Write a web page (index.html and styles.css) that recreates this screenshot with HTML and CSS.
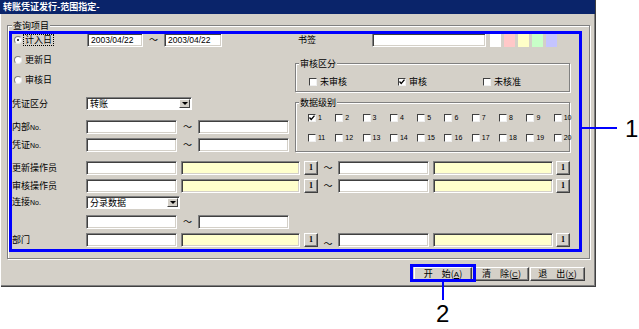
FILE: index.html
```html
<!DOCTYPE html>
<html lang="zh-CN">

<head>
    <meta charset="UTF-8">
    <title>转账凭证发行-范围指定-</title>
    <link rel="stylesheet" href="styles.css">
</head>

<body>
    <div class="stage">
        <div class="window">
            <div class="titlebar">转账凭证发行-范围指定-</div>

            <fieldset class="group main">
                <legend>查询项目</legend>

                <div class="top">
                    <!-- 左侧：日期、凭证区分、编号 -->
                    <div class="left">
                        <div class="row">
                            <label class="radio-item first">
                                <span class="radio on"></span>
                                <span class="focus">计入日</span>
                            </label>
                            <div class="field w56">2003/04/22</div>
                            <span class="tilde">～</span>
                            <div class="field w58">2003/04/22</div>
                        </div>
                        <div class="row small r2">
                            <label class="radio-item"><span class="radio"></span><span class="txt">更新日</span></label>
                        </div>
                        <div class="row small r3">
                            <label class="radio-item"><span class="radio"></span><span class="txt">审核日</span></label>
                        </div>
                        <div class="row sel r4">
                            <span class="label">凭证区分</span>
                            <div class="select w106"><span>转账</span><span class="arrow"></span></div>
                        </div>
                        <div class="row r5">
                            <span class="label">内部<small>No.</small></span>
                            <div class="field w91"></div>
                            <span class="tilde">～</span>
                            <div class="field w91"></div>
                        </div>
                        <div class="row r6">
                            <span class="label">凭证<small>No.</small></span>
                            <div class="field w91"></div>
                            <span class="tilde">～</span>
                            <div class="field w91"></div>
                        </div>
                    </div>

                    <!-- 右侧：书签、审核区分、数据级别 -->
                    <div class="right">
                        <div class="row">
                            <span class="label bm">书签</span>
                            <div class="field w114"></div>
                            <div class="swatches">
                                <span class="sw white"></span>
                                <span class="sw pink"></span>
                                <span class="sw yellow"></span>
                                <span class="sw green"></span>
                                <span class="sw blue"></span>
                            </div>
                        </div>

                        <fieldset class="group sub audit">
                            <legend>审核区分</legend>
                            <div class="checks">
                                <label class="chk c1"><span class="check"></span>未审核</label>
                                <label class="chk c2"><span class="check"><svg width="6" height="6" viewBox="0 0 6 6"><polyline points="0.5,2.5 2.2,4.5 5.5,0.6" fill="none" stroke="#000" stroke-width="1.3"/></svg></span>审核</label>
                                <label class="chk"><span class="check"></span>未核准</label>
                            </div>
                        </fieldset>

                        <fieldset class="group sub level">
                            <legend>数据级别</legend>
                            <div class="levels">
                                <label class="chk num"><span class="check"><svg width="6" height="6" viewBox="0 0 6 6"><polyline points="0.5,2.5 2.2,4.5 5.5,0.6" fill="none" stroke="#000" stroke-width="1.3"/></svg></span>1</label>
                                <label class="chk num"><span class="check"></span>2</label>
                                <label class="chk num"><span class="check"></span>3</label>
                                <label class="chk num"><span class="check"></span>4</label>
                                <label class="chk num"><span class="check"></span>5</label>
                                <label class="chk num"><span class="check"></span>6</label>
                                <label class="chk num"><span class="check"></span>7</label>
                                <label class="chk num"><span class="check"></span>8</label>
                                <label class="chk num"><span class="check"></span>9</label>
                                <label class="chk num last"><span class="check"></span>10</label>
                                <label class="chk num"><span class="check"></span>11</label>
                                <label class="chk num"><span class="check"></span>12</label>
                                <label class="chk num"><span class="check"></span>13</label>
                                <label class="chk num"><span class="check"></span>14</label>
                                <label class="chk num"><span class="check"></span>15</label>
                                <label class="chk num"><span class="check"></span>16</label>
                                <label class="chk num"><span class="check"></span>17</label>
                                <label class="chk num"><span class="check"></span>18</label>
                                <label class="chk num"><span class="check"></span>19</label>
                                <label class="chk num last"><span class="check"></span>20</label>
                            </div>
                        </fieldset>
                    </div>
                </div>

                <!-- 操作员、连接、部门 -->
                <div class="row r7">
                    <span class="label">更新操作员</span>
                    <div class="field w91"></div>
                    <div class="field yellow w119 gap"></div>
                    <span class="pick gap">1</span>
                    <span class="tilde w20">～</span>
                    <div class="field w91"></div>
                    <div class="field yellow w120 gap"></div>
                    <span class="pick gap3">1</span>
                </div>
                <div class="row r8">
                    <span class="label">审核操作员</span>
                    <div class="field w91"></div>
                    <div class="field yellow w119 gap"></div>
                    <span class="pick gap">1</span>
                    <span class="tilde w20">～</span>
                    <div class="field w91"></div>
                    <div class="field yellow w120 gap"></div>
                    <span class="pick gap3">1</span>
                </div>
                <div class="row sel r9">
                    <span class="label">连接<small>No.</small></span>
                    <div class="select w94"><span>分录数据</span><span class="arrow"></span></div>
                </div>
                <div class="row r10">
                    <span class="label"></span>
                    <div class="field w91"></div>
                    <span class="tilde">～</span>
                    <div class="field w91"></div>
                </div>
                <div class="row r11">
                    <span class="label">部门</span>
                    <div class="field w91"></div>
                    <div class="field yellow w119 gap"></div>
                    <span class="pick gap">1</span>
                    <span class="tilde w20 low">～</span>
                    <div class="field w91"></div>
                    <div class="field yellow w120 gap"></div>
                    <span class="pick gap3">1</span>
                </div>
            </fieldset>

            <div class="buttons">
                <span class="btn b-start">开　始(<u>A</u>)</span>
                <span class="btn b-clear">清　除(<u>C</u>)</span>
                <span class="btn b-exit">退　出(<u>X</u>)</span>
            </div>
        </div>

        <!-- 说明标注 -->
        <div class="mark mark-form"></div>
        <div class="lead lead-1"></div>
        <div class="num-label num-1">1</div>
        <div class="mark mark-start"></div>
        <div class="lead lead-2"></div>
        <div class="num-label num-2">2</div>
    </div>
</body>

</html>
```

FILE: styles.css
```css
* {
    box-sizing: border-box;
}

body {
    margin: 0;
    background-color: #fff;
    font-family: "Noto Sans CJK SC", sans-serif;
    font-size: 9px;
    color: #000;
}

.stage {
    position: relative;
    width: 639px;
    height: 329px;
}

.window {
    width: 596px;
    height: 287px;
    background-color: #d4d0c8;
    box-shadow: inset 1px 0 0 #fff, inset -1px -1px 0 #404040, inset -2px -2px 0 #808080;
}

.titlebar {
    height: 14px;
    margin-right: 1px;
    padding-left: 3px;
    background-color: #0a246a;
    color: #fff;
    font-weight: bold;
    line-height: 14px;
}

/* 分组框 */
.group {
    margin: 0;
    min-width: 0;
    border: 1px solid #808080;
    box-shadow: 1px 1px 0 #fff, inset 1px 1px 0 #fff;
}

.group legend {
    padding: 0 1px;
    line-height: 11px;
    background-color: #d4d0c8;
}

.main {
    width: 583px;
    margin: 6px 0 0 7px;
    padding: 2px 0 11px 4px;
}

.top {
    display: flex;
}

.left {
    width: 283px;
}

.right {
    width: 275px;
}

.row {
    display: flex;
    align-items: center;
    height: 14px;
}

.row.small {
    height: 12px;
}

.row.sel {
    height: 13px;
}

.r2 { margin-top: 7px; }
.r3 { margin-top: 8px; }
.r4 { margin-top: 11px; }
.r5 { margin-top: 10px; }
.r6 { margin-top: 4px; }
.r7 { margin-top: 9px; }
.r8 { margin-top: 4px; }
.r9 { margin-top: 3px; height: 12px; }
.r10 { margin-top: 6px; }
.r11 { margin-top: 4px; }

.label {
    width: 74px;
    line-height: 12px;
    white-space: nowrap;
}

.label small {
    font-family: "Liberation Sans", sans-serif;
    font-size: 7px;
}

.label.bm {
    width: 77px;
    padding-left: 3px;
}

/* 单选 */
.radio-item {
    display: flex;
    align-items: center;
    width: 75px;
    padding-left: 2px;
    line-height: 10px;
}

.radio {
    position: relative;
    width: 8px;
    height: 8px;
    border-radius: 50%;
    background-color: #fff;
    border: 1px solid;
    border-color: #808080 #e8e8e8 #e8e8e8 #808080;
}

.radio.on::after {
    content: "";
    position: absolute;
    left: 2px;
    top: 2px;
    width: 2px;
    height: 2px;
    border-radius: 50%;
    background-color: #000;
}

.radio-item .txt {
    margin-left: 3px;
}

.focus {
    margin-left: 1px;
    padding: 0 1px;
    border: 1px dotted #000;
}

/* 输入框 */
.field {
    height: 14px;
    background-color: #fff;
    border: 1px solid;
    border-color: #808080 #fff #fff #808080;
    box-shadow: inset 1px 1px 0 #404040, inset -1px -1px 0 #d4d0c8;
    padding-left: 3px;
    font-family: "Liberation Sans", sans-serif;
    font-size: 8.5px;
    line-height: 12px;
}

.field.yellow {
    background-color: #ffffcc;
}

.w56 { width: 56px; }
.w58 { width: 58px; }
.w91 { width: 91px; }
.w94 { width: 94px; }
.w106 { width: 106px; }
.w114 { width: 114px; }
.w119 { width: 119px; }
.w120 { width: 120px; }

.gap { margin-left: 4px; }
.gap3 { margin-left: 3px; }

.tilde {
    width: 21px;
    text-align: center;
    line-height: 10px;
}

.tilde.w20 {
    width: 20px;
}

.tilde.low {
    align-self: flex-end;
    line-height: 6px;
}

/* 下拉框 */
.select {
    display: flex;
    justify-content: space-between;
    align-items: center;
    height: 100%;
    padding: 1px 1px 1px 3px;
    background-color: #fff;
    border: 1px solid;
    border-color: #808080 #fff #fff #808080;
    box-shadow: inset 1px 1px 0 #404040;
    line-height: 10px;
}

.arrow {
    display: flex;
    align-items: center;
    justify-content: center;
    width: 11px;
    height: 100%;
    background-color: #d4d0c8;
    border: 1px solid;
    border-color: #fff #404040 #404040 #fff;
}

.arrow::after {
    content: "";
    border-left: 3px solid transparent;
    border-right: 3px solid transparent;
    border-top: 3px solid #000;
}

/* 书签颜色 */
.swatches {
    display: flex;
    gap: 3px;
    margin-left: 4px;
}

.sw {
    width: 11px;
    height: 14px;
}

.sw.white { background-color: #fff; }
.sw.pink { background-color: #ffc8c8; }
.sw.yellow { background-color: #ffffc8; }
.sw.green { background-color: #c8ffc8; }
.sw.blue { background-color: #c4c4ff; }

/* 复选 */
.sub {
    width: 275px;
    padding: 0 0 3px 3px;
}

.audit {
    margin-top: 11px;
}

.level {
    margin-top: 5px;
    padding-bottom: 7px;
}

.checks {
    display: flex;
    align-items: center;
    height: 12px;
    margin: 7px 0 0 10px;
}

.c1 { width: 89px; }
.c2 { width: 85px; }

.levels {
    display: flex;
    flex-wrap: wrap;
    row-gap: 8px;
    width: 262px;
    margin: 4px 0 0 9px;
}

.chk {
    display: flex;
    align-items: center;
    gap: 3px;
    line-height: 10px;
    white-space: nowrap;
}

.chk.num {
    width: 27.3px;
    height: 12px;
    gap: 2px;
    font-family: "Liberation Sans", sans-serif;
    font-size: 7px;
}

.chk.num.last {
    width: 16px;
}

.check {
    display: flex;
    align-items: center;
    justify-content: center;
    flex-shrink: 0;
    width: 8px;
    height: 8px;
    background-color: #fff;
    border: 1px solid;
    border-color: #404040 #f0f0f0 #f0f0f0 #404040;
}

/* 小按钮 */
.pick {
    width: 14px;
    height: 14px;
    background-color: #d4d0c8;
    border: 1px solid;
    border-color: #fff #404040 #404040 #fff;
    box-shadow: inset -1px -1px 0 #808080;
    font-family: "Liberation Serif", serif;
    font-size: 8px;
    font-weight: bold;
    line-height: 12px;
    text-align: center;
}

/* 底部按钮 */
.buttons {
    display: flex;
    justify-content: flex-end;
    margin-top: 8px;
    padding-right: 11px;
}

.btn {
    height: 14px;
    background-color: #d4d0c8;
    border: 1px solid;
    border-color: #fff #404040 #404040 #fff;
    box-shadow: inset -1px -1px 0 #808080;
    line-height: 12px;
    text-align: center;
}

.btn u {
    font-family: "Liberation Sans", sans-serif;
    font-size: 8px;
}

.b-start { width: 58px; margin-right: 2px; }
.b-clear { width: 55px; margin-right: 1px; }
.b-exit { width: 55px; }

/* 标注 */
.mark {
    position: absolute;
    border: 3px solid #0000ff;
}

.mark-form {
    left: 9px;
    top: 31px;
    width: 573px;
    height: 221px;
}

.mark-start {
    left: 410px;
    top: 264px;
    width: 66px;
    height: 18px;
}

.lead {
    position: absolute;
    background-color: #0000ff;
}

.lead-1 {
    left: 582px;
    top: 127px;
    width: 35px;
    height: 2px;
}

.lead-2 {
    left: 442px;
    top: 282px;
    width: 2px;
    height: 18px;
}

.num-label {
    position: absolute;
    font-family: "Liberation Sans", sans-serif;
    font-size: 24px;
    line-height: 24px;
}

.num-1 {
    left: 625px;
    top: 117px;
}

.num-2 {
    left: 436px;
    top: 302px;
}
```
